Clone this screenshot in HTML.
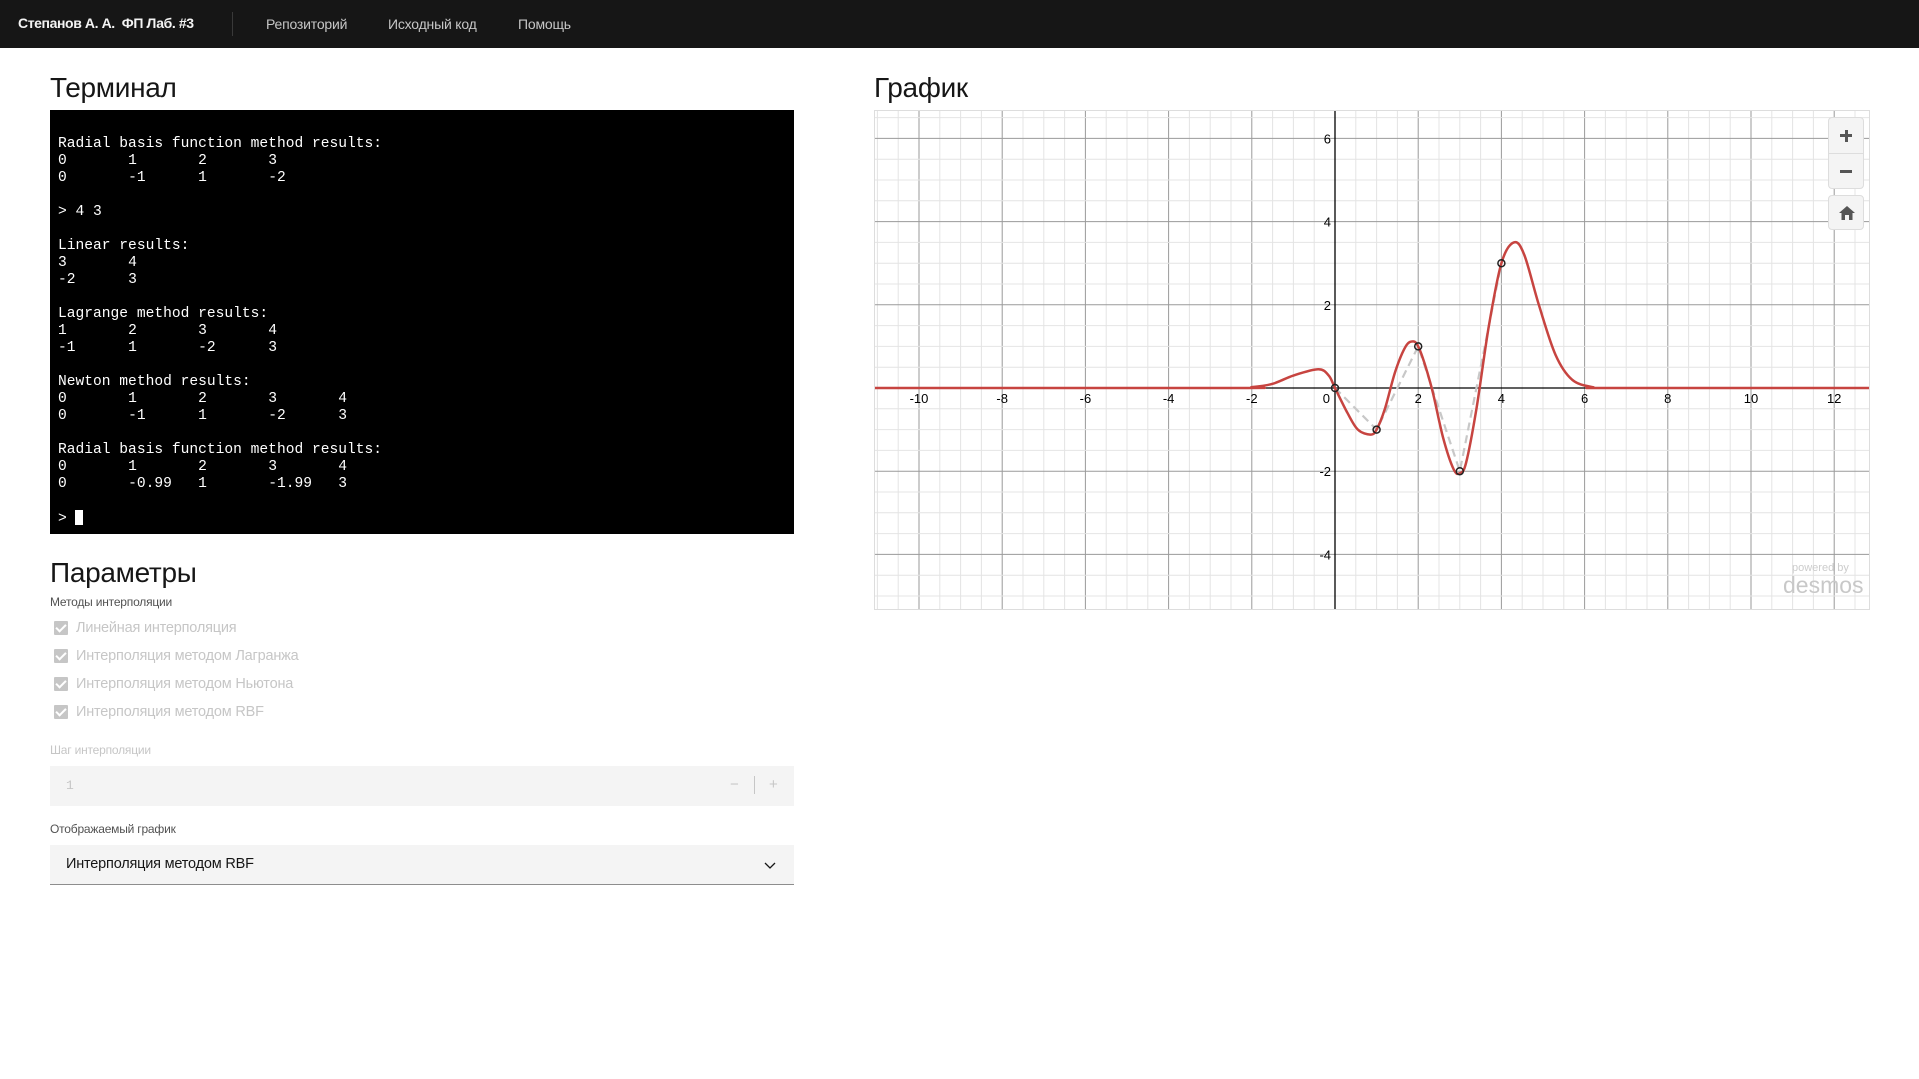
<!DOCTYPE html>
<html><head><meta charset="utf-8">
<style>
*{box-sizing:border-box;margin:0;padding:0}
body{width:1919px;height:1079px;background:#fff;position:relative;overflow:hidden;font-family:"Liberation Sans Narrow","Liberation Sans",sans-serif;color:#161616}
.hdr{position:absolute;left:0;top:0;width:1919px;height:48px;background:#161616}
.hdr .t{position:absolute;left:18px;top:15px;font-size:14px;letter-spacing:-0.4px;font-weight:bold;color:#f4f4f4}
.hdr .d{position:absolute;left:232px;top:12px;width:1px;height:24px;background:#393939}
.hdr .n{position:absolute;top:16px;font-size:14px;letter-spacing:-0.2px;color:#c6c6c6}
h2{position:absolute;font-weight:normal;font-size:28px;letter-spacing:-0.3px;color:#161616;font-family:"Liberation Sans Narrow","Liberation Sans",sans-serif}
.term{position:absolute;left:50px;top:110px;width:744px;height:424px;background:#000;color:#fff}
.term pre{position:absolute;left:8px;top:26px;font-family:"Liberation Mono",monospace;font-size:14.6px;line-height:17px;tab-size:8;-moz-tab-size:8}
.cur{display:inline-block;width:8px;height:15px;background:#fff;vertical-align:-3px;margin-left:8px}
.lbl{position:absolute;left:50px;font-size:12px;letter-spacing:-0.2px;color:#525252}
.cb{position:absolute;left:54px;width:14px;height:14px;background:#c6c6c6;border-radius:1px}
.cb:after{content:"";position:absolute;left:4px;top:1px;width:4px;height:8px;border:solid #fff;border-width:0 2px 2px 0;transform:rotate(45deg)}
.cbt{position:absolute;left:76px;font-size:14.5px;letter-spacing:-0.2px;color:#c6c6c6}
.inp{position:absolute;left:50px;width:744px;background:#f4f4f4}
</style></head><body>
<div class="hdr">
<div class="t">Степанов А. А.&nbsp; ФП Лаб. #3</div>
<div class="d"></div>
<div class="n" style="left:266px">Репозиторий</div>
<div class="n" style="left:388px">Исходный код</div>
<div class="n" style="left:518px">Помощь</div>
</div>
<h2 style="left:50px;top:72px">Терминал</h2>
<div class="term"><pre>Radial basis function method results:
0	1	2	3
0	-1	1	-2

&gt; 4 3

Linear results:
3	4
-2	3

Lagrange method results:
1	2	3	4
-1	1	-2	3

Newton method results:
0	1	2	3	4
0	-1	1	-2	3

Radial basis function method results:
0	1	2	3	4
0	-0.99	1	-1.99	3

&gt;<span class="cur"></span></pre></div>

<h2 style="left:50px;top:557px">Параметры</h2>
<div class="lbl" style="top:595px">Методы интерполяции</div>
<div class="cb" style="top:621px"></div><div class="cbt" style="top:620px">Линейная интерполяция</div>
<div class="cb" style="top:649px"></div><div class="cbt" style="top:648px">Интерполяция методом Лагранжа</div>
<div class="cb" style="top:677px"></div><div class="cbt" style="top:676px">Интерполяция методом Ньютона</div>
<div class="cb" style="top:705px"></div><div class="cbt" style="top:704px">Интерполяция методом RBF</div>
<div class="lbl" style="top:743px;color:#c6c6c6">Шаг интерполяции</div>
<div class="inp" style="top:766px;height:40px">
<span style="position:absolute;left:16px;top:12px;font-size:13px;color:#c6c6c6;font-family:'Liberation Mono',monospace">1</span>
<span style="position:absolute;left:680px;top:10px;font-size:15px;color:#c6c6c6">−</span>
<span style="position:absolute;left:704px;top:10px;width:1px;height:18px;background:#c6c6c6"></span>
<span style="position:absolute;left:719px;top:10px;font-size:15px;color:#c6c6c6">+</span>
</div>
<div class="lbl" style="top:822px">Отображаемый график</div>
<div class="inp" style="top:845px;height:40px;border-bottom:1px solid #8d8d8d">
<span style="position:absolute;left:16px;top:11px;font-size:14.5px;letter-spacing:-0.2px;color:#161616">Интерполяция методом RBF</span>
<svg style="position:absolute;left:714px;top:14px" width="12" height="12" viewBox="0 0 12 12"><path d="M1 4 L6 9 L11 4" fill="none" stroke="#161616" stroke-width="1.3"/></svg>
</div>

<h2 style="left:874px;top:72px">График</h2>
<svg id="g" style="position:absolute;left:874px;top:110px;border:1px solid #ddd" width="996" height="500"></svg>
<div style="position:absolute;left:1828px;top:117px;width:36px;height:72px;background:#f4f4f4;border:1px solid #ddd;border-radius:4px">
<div style="position:absolute;left:0;top:35px;width:34px;height:1px;background:#ddd"></div>
<div style="position:absolute;left:11px;top:16px;width:12px;height:3px;background:#555"></div>
<div style="position:absolute;left:15.5px;top:11.5px;width:3px;height:12px;background:#555"></div>
<div style="position:absolute;left:11px;top:52px;width:12px;height:3px;background:#555"></div>
</div>
<div style="position:absolute;left:1828px;top:195px;width:36px;height:35px;background:#f4f4f4;border:1px solid #ddd;border-radius:4px">
<svg style="position:absolute;left:10px;top:10px" width="16" height="14" viewBox="0 0 16 14"><path d="M8 0 L16 7 L13.5 7 L13.5 14 L10 14 L10 9 L6 9 L6 14 L2.5 14 L2.5 7 L0 7 Z" fill="#555"/></svg>
</div>
<div style="position:absolute;left:1792px;top:562px;font-size:11px;color:#ccc;font-family:'Liberation Sans',sans-serif">powered by</div>
<div style="position:absolute;left:1783px;top:572px;font-size:23px;color:#c8c8c8;font-family:'Liberation Sans',sans-serif">desmos</div>
<script>
(function(){
var s=document.getElementById('g'),W=996,H=500,ox=460,oy=277,u=41.6,h='';
function X(x){return ox+x*u}function Y(y){return oy-y*u}
for(var k=-24;k<=26;k++){var x=X(k/2);if(x<0||x>W)continue;h+='<line x1="'+x+'" y1="0" x2="'+x+'" y2="'+H+'" stroke="'+(k%4==0?'#9a9a9a':'#e4e4e4')+'" stroke-width="1"/>';}
for(var k=-12;k<=14;k++){var y=Y(k/2);if(y<0||y>H)continue;h+='<line x1="0" y1="'+y+'" x2="'+W+'" y2="'+y+'" stroke="'+(k%4==0?'#9a9a9a':'#e4e4e4')+'" stroke-width="1"/>';}
h+='<line x1="'+ox+'" y1="0" x2="'+ox+'" y2="'+H+'" stroke="#000" stroke-width="1.3"/>';
h+='<line x1="0" y1="'+oy+'" x2="'+W+'" y2="'+oy+'" stroke="#000" stroke-width="1.3"/>';
for(var k=-10;k<=12;k+=2){if(k==0)continue;h+='<text x="'+(X(k))+'" y="'+(oy+15)+'" font-size="13" text-anchor="middle" font-family="Liberation Sans Narrow,Liberation Sans,sans-serif" fill="#000">'+k+'</text>';}
h+='<text x="'+(ox-5)+'" y="'+(oy+15)+'" font-size="13" text-anchor="end" font-family="Liberation Sans Narrow,Liberation Sans,sans-serif">0</text>';
for(var k=-4;k<=6;k+=2){if(k==0)continue;h+='<text x="'+(ox-4)+'" y="'+(Y(k)+5)+'" font-size="13" text-anchor="end" font-family="Liberation Sans Narrow,Liberation Sans,sans-serif">'+k+'</text>';}
var pts=[[0,0],[1,-1],[2,1],[3,-2],[4,3]];
h+='<polyline points="'+pts.map(function(p){return X(p[0])+','+Y(p[1])}).join(' ')+'" fill="none" stroke="#c8c8c8" stroke-width="2.2" stroke-dasharray="8,5"/>';
var c=[[-11.5,0],[-2.5,0],[-2,0.02],[-1.5,0.1],[-1,0.3],[-0.4,0.45],[-0.15,0.3],[0,0],[0.3,-0.6],[0.55,-1.0],[0.85,-1.12],[1.0,-1.0],[1.2,-0.5],[1.45,0.4],[1.7,1.0],[1.88,1.12],[2.0,1.0],[2.15,0.6],[2.35,-0.1],[2.6,-1.2],[2.85,-1.95],[3.0,-2.05],[3.15,-1.8],[3.4,-0.5],[3.7,1.5],[4.0,3.0],[4.3,3.5],[4.55,3.2],[4.9,2.0],[5.3,0.8],[5.7,0.2],[6.2,0.02],[6.7,0],[13.5,0]];
var P=c.map(function(p){return[X(p[0]),Y(p[1])]}),d='M'+P[0][0]+' '+P[0][1];
for(var i=0;i<P.length-1;i++){var p0=P[Math.max(i-1,0)],p1=P[i],p2=P[i+1],p3=P[Math.min(i+2,P.length-1)];
d+=' C'+(p1[0]+(p2[0]-p0[0])/6)+' '+(p1[1]+(p2[1]-p0[1])/6)+' '+(p2[0]-(p3[0]-p1[0])/6)+' '+(p2[1]-(p3[1]-p1[1])/6)+' '+p2[0]+' '+p2[1];}
h+='<path d="'+d+'" fill="none" stroke="#c74440" stroke-width="2.5"/>';
pts.forEach(function(p){h+='<circle cx="'+X(p[0])+'" cy="'+Y(p[1])+'" r="3.5" fill="none" stroke="#222" stroke-width="1.5"/>'});
s.innerHTML=h;
})();
</script>
</body></html>
